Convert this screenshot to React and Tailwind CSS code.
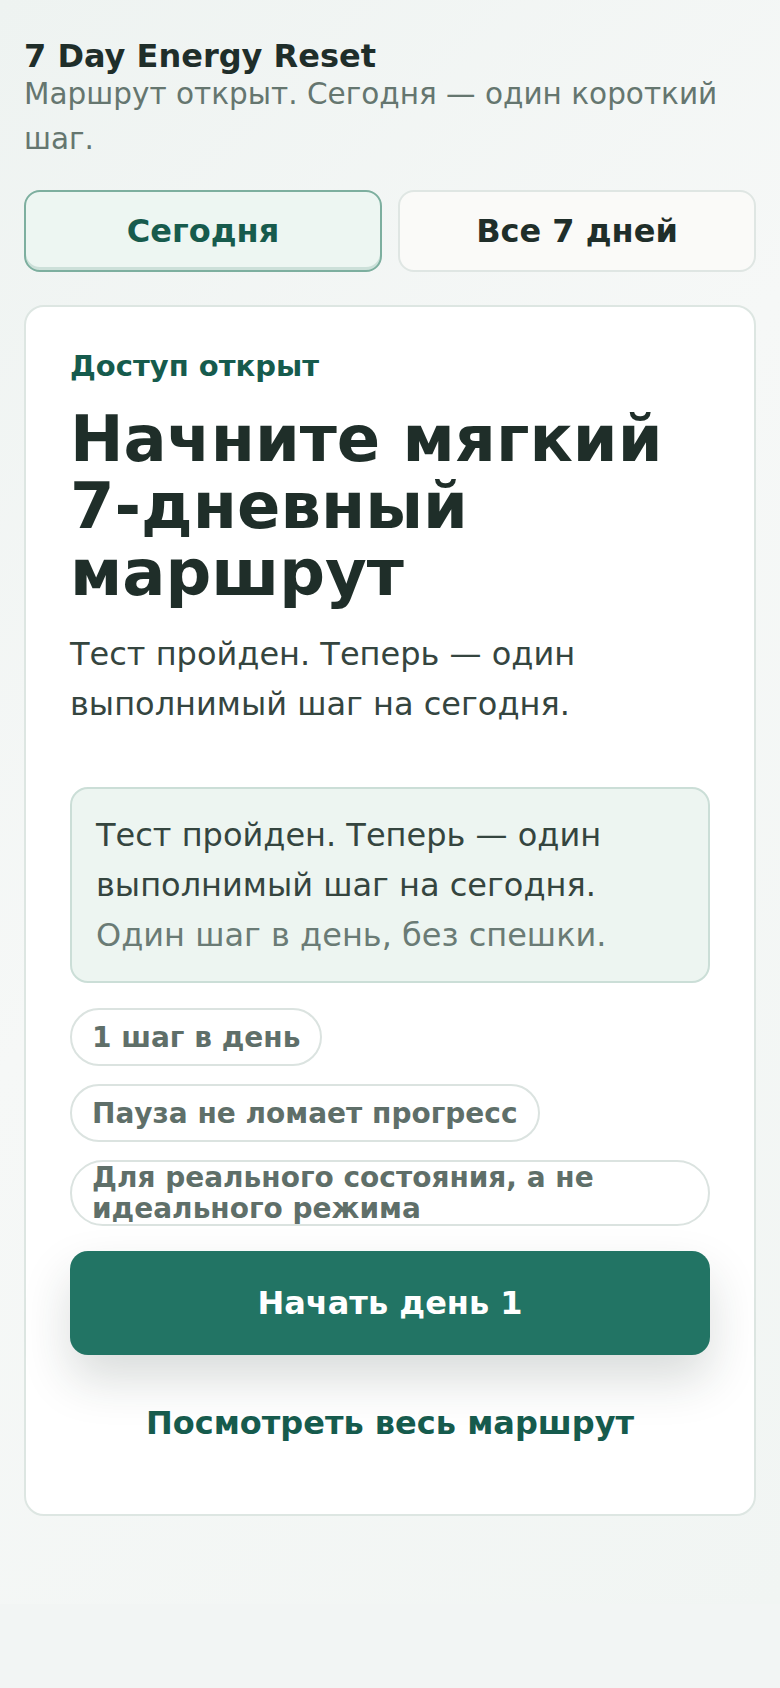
import React from "react";

export default function App() {
  return (
    <div className="min-h-[1688px] bg-[#f2f5f4] font-['DejaVu_Sans',sans-serif]">
      <div className="bg-[linear-gradient(135deg,#eef3f1_0%,#f6f8f7_45%,#f1f5f3_100%)] px-[24px] pt-[40px] pb-[88px]">
        <h1 className="text-[32px] font-bold leading-none text-[#1f2e2a]">7 Day Energy Reset</h1>
        <p className="text-[29.5px] leading-[45px] text-[#65766f]">
          Маршрут открыт. Сегодня — один короткий шаг.
        </p>

        <div className="mt-[28px] grid grid-cols-2 gap-[16px]">
          <button className="flex h-[82px] items-center justify-center rounded-[16px] border-2 border-[#7daf9f] bg-[#edf6f2] text-[32px] font-bold text-[#175b4d] shadow-[inset_0_-3px_0_rgba(200,222,214,0.9)]">
            Сегодня
          </button>
          <button className="flex h-[82px] items-center justify-center rounded-[16px] border-2 border-[#dfe6e3] bg-[#fafaf8] text-[32px] font-bold text-[#1f2e2a]">
            Все 7 дней
          </button>
        </div>

        <div className="mt-[33px] rounded-[20px] border-2 border-[#dde6e2] bg-white px-[44px] pt-[44px] pb-[47px]">
          <div className="text-[29px] font-bold leading-[31px] text-[#165b4d]">Доступ открыт</div>
          <h2 className="mt-[24px] text-[64px] font-bold leading-[67px] text-[#1f2e29]">
            Начните мягкий 7-дневный маршрут
          </h2>
          <p className="mt-[22px] text-[32px] leading-[50px] text-[#35453f]">
            Тест пройден. Теперь — один выполнимый шаг на сегодня.
          </p>

          <div className="mt-[58px] rounded-[18px] border-2 border-[#cbded7] bg-[#edf5f1] px-[24px] py-[21px] text-[32px] leading-[50px]">
            <p className="text-[#35453f]">Тест пройден. Теперь — один выполнимый шаг на сегодня.</p>
            <p className="text-[#6a7b75]">Один шаг в день, без спешки.</p>
          </div>

          <div className="mt-[25px] flex flex-col items-start gap-[18px]">
            <span className="flex h-[58px] items-center rounded-full border-2 border-[#dbe3e0] bg-white px-[20px] text-[28px] font-bold leading-[31px] text-[#5f6f69]">
              1 шаг в день
            </span>
            <span className="flex h-[58px] items-center rounded-full border-2 border-[#dbe3e0] bg-white px-[20px] text-[28px] font-bold leading-[31px] text-[#5f6f69]">
              Пауза не ломает прогресс
            </span>
            <span className="flex h-[66px] w-full items-center rounded-full border-2 border-[#dbe3e0] bg-white px-[20px] text-[28px] font-bold leading-[31px] text-[#5f6f69]">
              Для реального состояния, а не идеального режима
            </span>
          </div>

          <button className="mt-[25px] flex h-[104px] w-full items-center justify-center rounded-[18px] bg-[#227464] text-[32px] font-bold text-white shadow-[0_24px_48px_rgba(30,45,40,0.17)]">
            Начать день 1
          </button>
          <button className="mt-[24px] flex h-[88px] w-full items-center justify-center text-[32px] font-bold text-[#165b4d]">
            Посмотреть весь маршрут
          </button>
        </div>
      </div>
    </div>
  );
}
